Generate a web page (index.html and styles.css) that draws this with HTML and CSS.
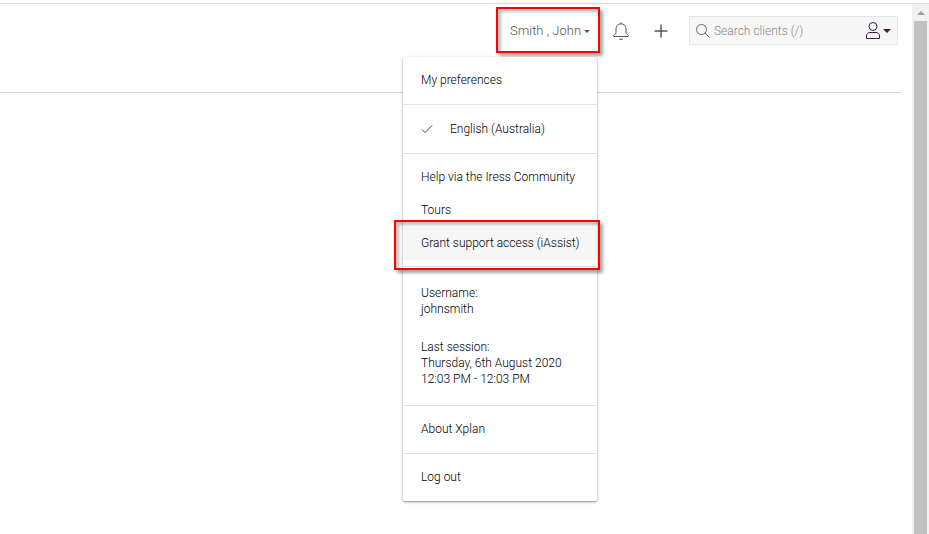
FILE: index.html
```html
<!DOCTYPE html>
<html lang="en-AU">
<head>
  <meta charset="UTF-8" />
  <meta name="viewport" content="width=device-width, initial-scale=1" />
  <title>Xplan</title>
  <link rel="stylesheet" href="styles.css">
</head>
<body>

<div class="page">
  <header class="header">
    <div class="user highlight">
      <button type="button" class="user-button" aria-haspopup="true" aria-expanded="true">Smith , John <span class="caret"></span></button>

      <nav class="menu" aria-label="User menu">
        <div class="menu-section">
          <a href="#" class="menu-item">My preferences</a>
        </div>
        <div class="menu-section languages">
          <a href="#" class="menu-item">
            <svg class="check" width="12" height="10" viewBox="0 0 12 10"><path d="M1 5.5l3 3L11 1.5" fill="none" stroke="#444" /></svg>
            English (Australia)
          </a>
        </div>
        <div class="menu-section help">
          <a href="#" class="menu-item">Help via the Iress Community</a>
          <a href="#" class="menu-item">Tours</a>
          <a href="#" class="menu-item active">Grant support access (iAssist)<span class="item-highlight highlight"></span></a>
        </div>
        <div class="menu-section session">
          <div>Username:<br>johnsmith</div>
          <div>Last session:<br>Thursday, 6th August 2020<br>12:03 PM - 12:03 PM</div>
        </div>
        <div class="menu-section">
          <a href="#" class="menu-item">About Xplan</a>
        </div>
        <div class="menu-section">
          <a href="#" class="menu-item">Log out</a>
        </div>
      </nav>
    </div>

    <button type="button" class="icon-button" aria-label="Notifications">
      <svg width="16" height="18" viewBox="0 0 16 18" fill="none" stroke="#555">
        <path d="M8 .5V2M3 11V6.800a5 5 0 0 1 10 0V11c0 1 2.500 1.500 2.500 3 0 .3-.2.500-.5.500H1c-.3 0-.5-.2-.5-.5 0-1.500 2.500-2 2.500-3z" />
        <path d="M6 16.500c.5.700 1.100 1 2 1s1.500-.3 2-1" />
      </svg>
    </button>
    <button type="button" class="icon-button" aria-label="Add">
      <svg width="14" height="14" viewBox="0 0 14 14"><path d="M7 .5v13M.5 7h13" fill="none" stroke="#555" stroke-width="1.5" /></svg>
    </button>

    <form class="search">
      <svg width="14" height="14" viewBox="0 0 14 14" fill="none" stroke="#666"><circle cx="5.5" cy="5.5" r="5" /><path d="M9 9l4.500 4.500" /></svg>
      <input type="search" class="search-input" placeholder="Search clients (/)" aria-label="Search clients">
      <button type="button" class="search-type" aria-label="Search type">
        <svg width="14" height="17" viewBox="0 0 14 17" fill="none" stroke="#3d1a4a"><circle cx="7" cy="4.5" r="4" /><path d="M.5 16.500v-2.500c0-2.200 1.300-3.500 3.500-3.500h6c2.200 0 3.500 1.300 3.500 3.500v2.500z" /></svg>
        <span class="caret caret-large"></span>
      </button>
    </form>
  </header>
</div>

<div class="scrollbar">
  <span class="scroll-arrow"></span>
  <div class="scroll-thumb"></div>
</div>

</body>
</html>
```
FILE: styles.css
```css
* {
  box-sizing: border-box;
}
body {
  display: flex;
  height: 100vh;
  margin: 0;
  padding-top: 3px;
  overflow: hidden;
  background: #fff;
  color: #000;
  font: 300 12px/16px Roboto, sans-serif;
}
button {
  margin: 0;
  padding: 0;
  border: 0;
  background: none;
  font: inherit;
  color: inherit;
  cursor: pointer;
}
svg {
  display: block;
}
.page {
  flex: 1;
  padding-right: 11px;
  border-top: 1px solid #ddd;
}
.header {
  display: flex;
  justify-content: flex-end;
  padding: 3px 3px 38px 0;
  border-bottom: 1px solid #d8d8d8;
}
.highlight {
  border: 2px solid #f00;
  box-shadow: 3px 3px 3px rgba(0, 0, 0, 0.35), inset 3px 3px 3px rgba(0, 0, 0, 0.25);
}
.user {
  position: relative;
  z-index: 1;
  width: 104px;
  height: 46px;
  margin-right: 13px;
}
.user-button {
  display: flex;
  align-items: center;
  gap: 3px;
  width: 100%;
  height: 100%;
  padding: 2px 0 0 12px;
  font-size: 13px;
  color: #555;
  white-space: nowrap;
}
.caret {
  border: 3px solid transparent;
  border-top-color: currentColor;
  border-bottom: 0;
}
.caret-large {
  border-width: 4px 4px 0;
}
.icon-button {
  height: 47px;
  margin-right: 25px;
}
.icon-button + .icon-button {
  margin-right: 21px;
}
.search {
  display: flex;
  align-items: center;
  width: 209px;
  height: 29px;
  margin-top: 9px;
  padding: 0 6px;
  border: 1px solid #e6e6e6;
  background: #f7f7f7;
}
.search-input {
  flex: 1;
  min-width: 0;
  padding: 0 0 0 4px;
  border: 0;
  outline: 0;
  background: none;
  font: inherit;
  color: #333;
}
.search-input::placeholder {
  color: #888;
}
.search-type {
  display: flex;
  align-items: center;
  gap: 3px;
  color: #3d1a4a;
}
.menu {
  position: absolute;
  top: 48px;
  right: 1px;
  z-index: -1;
  width: 194px;
  border-radius: 2px;
  background: #fff;
  box-shadow: 0 1px 2px rgba(0, 0, 0, 0.4), 0 1px 4px rgba(0, 0, 0, 0.1);
}
.menu-section {
  padding: 7px 0;
}
.menu-section + .menu-section {
  border-top: 1px solid #e5e5e5;
}
.menu-section.languages {
  padding-top: 8px;
}
.menu-section.help {
  padding-bottom: 6px;
}
.menu-item {
  display: flex;
  position: relative;
  padding: 8px 18px 9px;
  color: inherit;
  text-decoration: none;
  white-space: nowrap;
}
.active {
  background: #f6f6f6;
}
.item-highlight {
  position: absolute;
  inset: -7px -3px -10px -9px;
}
.check {
  align-self: center;
  margin-right: 17px;
}
.session {
  display: grid;
  gap: 22px;
  padding: 18px;
}
.scrollbar {
  display: flex;
  flex-direction: column;
  align-items: center;
  gap: 6px;
  width: 17px;
  padding-top: 7px;
  border-top: 1px solid #ddd;
  background: #f1f1f1;
}
.scroll-arrow {
  border: 4px solid transparent;
  border-top: 0;
  border-bottom-color: #a0a0a0;
}
.scroll-thumb {
  flex: 1;
  width: 13px;
  background: #c1c1c1;
}
```
